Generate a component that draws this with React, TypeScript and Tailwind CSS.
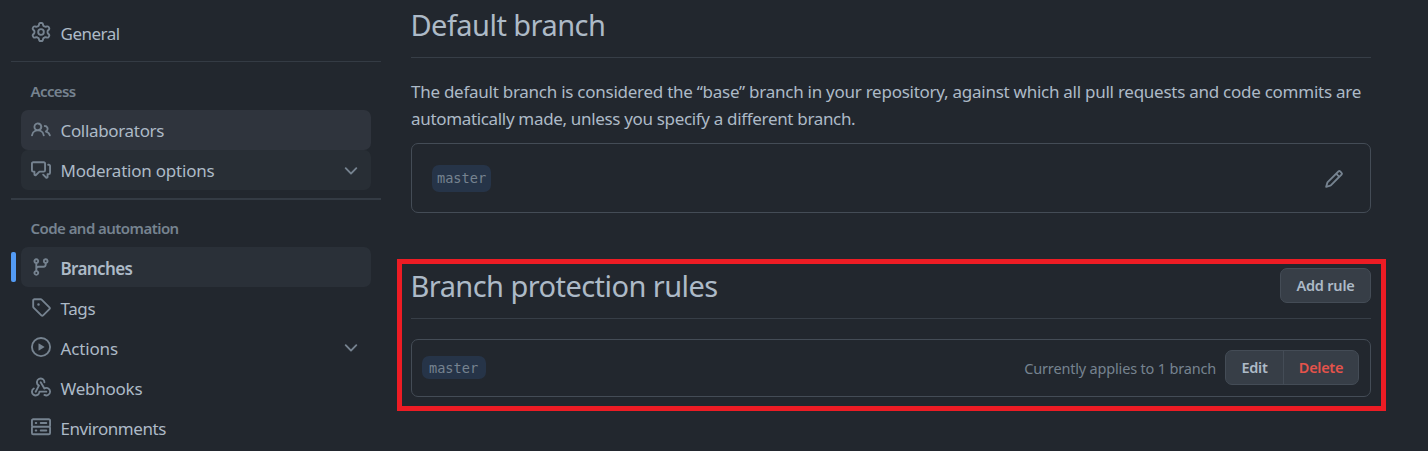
import type { ReactNode } from "react";

const icons = {
  gear: "M8 0a8.2 8.2 0 0 1 .701.031C9.444.095 9.99.645 10.16 1.29l.288 1.107c.018.066.079.158.212.224.231.114.454.243.668.386.123.082.233.09.299.071l1.103-.303c.644-.176 1.392.021 1.82.63.27.385.506.792.704 1.218.315.675.111 1.422-.364 1.891l-.814.806c-.049.048-.098.147-.088.294.016.257.016.515 0 .772-.01.147.038.246.088.294l.814.806c.475.469.679 1.216.364 1.891a7.977 7.977 0 0 1-.704 1.217c-.428.61-1.176.807-1.82.63l-1.102-.302c-.067-.019-.177-.011-.3.071a5.909 5.909 0 0 1-.668.386c-.133.066-.194.158-.211.224l-.29 1.106c-.168.646-.715 1.196-1.458 1.26a8.006 8.006 0 0 1-1.402 0c-.743-.064-1.289-.614-1.458-1.26l-.289-1.106c-.018-.066-.079-.158-.212-.224a5.738 5.738 0 0 1-.668-.386c-.123-.082-.233-.09-.299-.071l-1.103.303c-.644.176-1.392-.021-1.82-.63a8.12 8.12 0 0 1-.704-1.218c-.315-.675-.111-1.422.363-1.891l.815-.806c.05-.048.098-.147.088-.294a6.214 6.214 0 0 1 0-.772c.01-.147-.038-.246-.088-.294l-.815-.806C.635 6.045.431 5.298.746 4.623a7.92 7.92 0 0 1 .704-1.217c.428-.61 1.176-.807 1.82-.63l1.102.302c.067.019.177.011.3-.071.214-.143.437-.272.668-.386.133-.066.194-.158.211-.224l.29-1.106C6.009.645 6.556.095 7.299.03 7.53.01 7.764 0 8 0Zm-.571 1.525c-.036.003-.108.036-.137.146l-.289 1.105c-.147.561-.549.967-.998 1.189-.173.086-.34.183-.5.29-.417.278-.97.423-1.529.27l-1.103-.303c-.109-.03-.175.016-.195.045-.22.312-.412.644-.573.99-.014.031-.021.11.059.19l.815.806c.411.406.562.957.53 1.456a4.709 4.709 0 0 0 0 .582c.032.499-.119 1.05-.53 1.456l-.815.806c-.081.08-.073.159-.059.19.162.346.353.677.573.989.02.03.085.076.195.046l1.102-.303c.56-.153 1.113-.008 1.53.27.161.107.328.204.501.29.447.222.85.629.997 1.189l.289 1.105c.029.109.101.143.137.146a6.6 6.6 0 0 0 1.142 0c.036-.003.108-.036.137-.146l.289-1.105c.147-.561.549-.967.998-1.189.173-.086.34-.183.5-.29.417-.278.97-.423 1.529-.27l1.103.303c.109.029.175-.016.195-.045.22-.313.411-.644.573-.99.014-.031.021-.11-.059-.19l-.815-.806c-.411-.406-.562-.957-.53-1.456a4.709 4.709 0 0 0 0-.582c-.032-.499.119-1.05.53-1.456l.815-.806c.081-.08.073-.159.059-.19a6.464 6.464 0 0 0-.573-.989c-.02-.03-.085-.076-.195-.046l-1.102.303c-.56.153-1.113.008-1.53-.27a4.44 4.44 0 0 0-.501-.29c-.447-.222-.85-.629-.997-1.189l-.289-1.105c-.029-.11-.101-.143-.137-.146a6.6 6.6 0 0 0-1.142 0ZM11 8a3 3 0 1 1-6 0 3 3 0 0 1 6 0ZM9.5 8a1.5 1.5 0 1 0-3.001.001A1.5 1.5 0 0 0 9.5 8Z",
  people:
    "M2 5.5a3.5 3.5 0 1 1 5.898 2.549 5.508 5.508 0 0 1 3.034 4.084.75.75 0 1 1-1.482.235 4 4 0 0 0-7.9 0 .75.75 0 0 1-1.482-.236A5.507 5.507 0 0 1 3.102 8.05 3.493 3.493 0 0 1 2 5.5ZM11 4a3.001 3.001 0 0 1 2.22 5.018 5.01 5.01 0 0 1 2.56 3.012.749.749 0 0 1-.885.954.752.752 0 0 1-.549-.514 3.507 3.507 0 0 0-2.522-2.372.75.75 0 0 1-.574-.73v-.352a.75.75 0 0 1 .416-.672A1.5 1.5 0 0 0 11 5.5.75.75 0 0 1 11 4Zm-5.5-.5a2 2 0 1 0-.001 3.999A2 2 0 0 0 5.5 3.5Z",
  discussion:
    "M1.75 1h8.5c.966 0 1.75.784 1.75 1.75v5.5A1.75 1.75 0 0 1 10.25 10H7.061l-2.574 2.573A1.458 1.458 0 0 1 2 11.543V10h-.25A1.75 1.75 0 0 1 0 8.25v-5.5C0 1.784.784 1 1.75 1ZM1.5 2.75v5.5c0 .138.112.25.25.25h1a.75.75 0 0 1 .75.75v2.19l2.72-2.72a.749.749 0 0 1 .53-.22h3.5a.25.25 0 0 0 .25-.25v-5.5a.25.25 0 0 0-.25-.25h-8.5a.25.25 0 0 0-.25.25Zm13 2a.25.25 0 0 0-.25-.25h-.5a.75.75 0 0 1 0-1.5h.5c.966 0 1.75.784 1.75 1.75v5.5A1.75 1.75 0 0 1 14.25 12H14v1.543a1.458 1.458 0 0 1-2.487 1.03L9.22 12.28a.749.749 0 0 1 .326-1.275.749.749 0 0 1 .734.215l2.22 2.22v-2.19a.75.75 0 0 1 .75-.75h1a.25.25 0 0 0 .25-.25Z",
  branch:
    "M9.5 3.25a2.25 2.25 0 1 1 3 2.122V6A2.5 2.5 0 0 1 10 8.5H6a1 1 0 0 0-1 1v1.128a2.251 2.251 0 1 1-1.5 0V5.372a2.25 2.25 0 1 1 1.5 0v1.836A2.493 2.493 0 0 1 6 7h4a1 1 0 0 0 1-1v-.628A2.25 2.25 0 0 1 9.5 3.25Zm-6 0a.75.75 0 1 0 1.5 0 .75.75 0 0 0-1.5 0Zm8.25-.75a.75.75 0 1 0 0 1.5.75.75 0 0 0 0-1.5ZM4.25 12a.75.75 0 1 0 0 1.5.75.75 0 0 0 0-1.5Z",
  tag: "M1 7.775V2.75C1 1.784 1.784 1 2.75 1h5.025c.464 0 .91.184 1.238.513l6.25 6.25a1.75 1.75 0 0 1 0 2.474l-5.026 5.026a1.75 1.75 0 0 1-2.474 0l-6.25-6.25A1.752 1.752 0 0 1 1 7.775Zm1.5 0c0 .066.026.13.073.177l6.25 6.25a.25.25 0 0 0 .354 0l5.025-5.025a.25.25 0 0 0 0-.354l-6.25-6.25a.25.25 0 0 0-.177-.073H2.75a.25.25 0 0 0-.25.25ZM6 5a1 1 0 1 1 0 2 1 1 0 0 1 0-2Z",
  play: "M8 0a8 8 0 1 1 0 16A8 8 0 0 1 8 0ZM1.5 8a6.5 6.5 0 1 0 13 0 6.5 6.5 0 0 0-13 0Zm4.879-2.773 4.264 2.559a.25.25 0 0 1 0 .428l-4.264 2.559A.25.25 0 0 1 6 10.559V5.442a.25.25 0 0 1 .379-.215Z",
  webhook:
    "M5.5 4.25a2.25 2.25 0 0 1 4.5 0 .75.75 0 0 0 1.5 0 3.75 3.75 0 1 0-6.14 2.889l-2.272 4.258a.75.75 0 0 0 1.324.706L7 7.25a.75.75 0 0 0-.309-1.015A2.25 2.25 0 0 1 5.5 4.25ZM7.364 3.607a.75.75 0 0 1 1.03.257l2.608 4.349a3.75 3.75 0 1 1-.628 6.785.75.75 0 0 1 .752-1.299 2.25 2.25 0 1 0-.033-3.88.75.75 0 0 1-1.03-.256L7.107 4.636a.75.75 0 0 1 .257-1.03ZM2.9 8.776A.75.75 0 0 1 2.625 9.8 2.25 2.25 0 1 0 6 11.75a.75.75 0 0 1 .75-.751h5.5a.75.75 0 0 1 0 1.5H7.425a3.751 3.751 0 1 1-5.55-3.998.75.75 0 0 1 1.024.274Z",
  server:
    "M1.75 1h12.5c.966 0 1.75.784 1.75 1.75v4c0 .372-.116.717-.314 1 .198.283.314.628.314 1v4a1.75 1.75 0 0 1-1.75 1.75H1.75A1.75 1.75 0 0 1 0 12.75v-4c0-.358.109-.707.314-1a1.739 1.739 0 0 1-.314-1v-4C0 1.784.784 1 1.75 1ZM1.5 2.75v4c0 .138.112.25.25.25h12.5a.25.25 0 0 0 .25-.25v-4a.25.25 0 0 0-.25-.25H1.75a.25.25 0 0 0-.25.25Zm.25 5.75a.25.25 0 0 0-.25.25v4c0 .138.112.25.25.25h12.5a.25.25 0 0 0 .25-.25v-4a.25.25 0 0 0-.25-.25ZM7 4.75A.75.75 0 0 1 7.75 4h4.5a.75.75 0 0 1 0 1.5h-4.5A.75.75 0 0 1 7 4.75ZM7.75 10h4.5a.75.75 0 0 1 0 1.5h-4.5a.75.75 0 0 1 0-1.5ZM3 4.75A.75.75 0 0 1 3.75 4h.5a.75.75 0 0 1 0 1.5h-.5A.75.75 0 0 1 3 4.75ZM3.75 10h.5a.75.75 0 0 1 0 1.5h-.5a.75.75 0 0 1 0-1.5Z",
  pencil:
    "M11.013 1.427a1.75 1.75 0 0 1 2.474 0l1.086 1.086a1.75 1.75 0 0 1 0 2.474l-8.61 8.61c-.21.21-.47.364-.756.445l-3.251.93a.75.75 0 0 1-.927-.928l.929-3.25c.081-.286.235-.547.445-.758l8.61-8.61Zm.176 4.823L9.75 4.81l-6.286 6.287a.253.253 0 0 0-.064.108l-.558 1.953 1.953-.558a.253.253 0 0 0 .108-.064Zm1.238-3.763a.25.25 0 0 0-.354 0L10.811 3.75l1.439 1.44 1.263-1.263a.25.25 0 0 0 0-.354Z",
  chevron:
    "M12.78 5.22a.749.749 0 0 1 0 1.06l-4.25 4.25a.749.749 0 0 1-1.06 0L3.22 6.28a.749.749 0 1 1 1.06-1.06L8 8.939l3.72-3.719a.749.749 0 0 1 1.06 0Z",
};

function Icon({ name, className = "" }: { name: keyof typeof icons; className?: string }) {
  return (
    <svg viewBox="0 0 16 16" className={`size-5 shrink-0 fill-[#768390] ${className}`} aria-hidden="true">
      <path d={icons[name]} />
    </svg>
  );
}

type ItemProps = {
  icon: keyof typeof icons;
  label: string;
  text?: string;
  className?: string;
  expandable?: boolean;
};

function Item({ icon, label, text = "pt-1 tracking-[-0.4px]", className = "", expandable }: ItemProps) {
  return (
    <li className={`mx-2.5 flex h-10 items-center gap-[9.5px] rounded-[7px] px-2.5 ${className}`}>
      <Icon name={icon} />
      <span className={`grow text-[17px] leading-6 whitespace-nowrap text-[#adbac7] ${text}`}>{label}</span>
      {expandable && <Icon name="chevron" className="mt-0.5" />}
    </li>
  );
}

function GroupTitle({ children, className }: { children: ReactNode; className: string }) {
  return (
    <h3 className={`pl-[19.5px] text-[15px] leading-5 font-semibold whitespace-nowrap text-[#768390] ${className}`}>
      {children}
    </h3>
  );
}

function BranchName({ className }: { className: string }) {
  return (
    <span
      className={`flex items-center rounded-[7px] bg-[#263448] pt-0.5 font-['DejaVu_Sans_Mono',monospace] text-[13.6px] leading-none text-[#768390] ${className}`}
    >
      master
    </span>
  );
}

export default function App() {
  return (
    <div className="relative flex h-[451px] w-[1428px] overflow-hidden bg-[#22272e] font-['Noto_Sans',sans-serif] text-[#adbac7]">
      <nav className="ml-[11px] w-[370px] shrink-0 pt-3">
        <ul>
          <Item icon="gear" label="General" text="pt-1 tracking-[-0.5px]" />
        </ul>
        <hr className="mt-[9px] border-[#343b44]" />
        <GroupTitle className="mt-[19px] mb-[9px] tracking-[-0.6px]">Access</GroupTitle>
        <ul>
          <Item
            icon="people"
            label="Collaborators"
            text="pt-0.5 tracking-[-0.33px]"
            className="bg-[#2f343d]"
          />
          <Item
            icon="discussion"
            label="Moderation options"
            text="pt-0.5 tracking-[-0.22px]"
            className="bg-[#282e35]"
            expandable
          />
        </ul>
        <hr className="mt-2 border-t-2 border-[#343b44]" />
        <GroupTitle className="mt-[18px] mb-[9px] tracking-[-0.55px]">Code and automation</GroupTitle>
        <ul>
          <Item
            icon="branch"
            label="Branches"
            text="pt-1 font-semibold tracking-[-0.62px]"
            className="relative bg-[#2a3038] before:absolute before:top-[5px] before:-left-2.5 before:h-[30px] before:w-[5px] before:rounded-[2px] before:bg-[#539bf5]"
          />
          <Item icon="tag" label="Tags" />
          <Item icon="play" label="Actions" text="pt-1 tracking-[-0.15px]" expandable />
          <Item icon="webhook" label="Webhooks" text="pt-1 tracking-[-0.25px]" />
          <Item icon="server" label="Environments" text="pt-1 tracking-[-0.45px]" />
        </ul>
      </nav>

      <main className="ml-[30px] w-[960px] shrink-0 whitespace-nowrap">
        <h2 className="-ml-[0.5px] flex h-[58px] items-center pb-2 text-[29px] tracking-[-0.55px]">Default branch</h2>
        <hr className="-mt-px border-[#373e47]" />
        <p className="mt-5 text-[17px] leading-[27px] tracking-[-0.26px]">
          The default branch is considered the “base” branch in your repository, against which all pull requests and
          code commits are
          <br />
          <span className="tracking-[-0.33px]">automatically made, unless you specify a different branch.</span>
        </p>
        <div className="mt-[11px] flex h-[70px] items-center justify-between rounded-[7px] border border-[#444c56] pr-[26px] pl-5">
          <BranchName className="h-[27px] px-[5px]" />
          <Icon name="pencil" className="mt-0.5" />
        </div>

        <div className="mt-[46px] flex h-[60px] items-start justify-between border-b border-[#373e47] pt-[9px]">
          <h2 className="-mt-0.5 -ml-[0.5px] text-[29px] leading-10 tracking-[-0.56px]">Branch protection rules</h2>
          <button className="h-[35px] w-[91px] rounded-[7px] border border-[#444c56] bg-[#373e47] text-[14.5px] font-semibold tracking-[-0.2px]">
            Add rule
          </button>
        </div>
        <div className="mt-5 flex h-[58px] items-center rounded-[7px] border border-[#444c56] pr-[11px] pl-2.5">
          <BranchName className="-mt-px h-[23px] w-16 px-[7px]" />
          <span className="mt-0.5 mr-[9px] ml-auto text-[14.5px] tracking-[-0.18px] text-[#768390]">
            Currently applies to 1 branch
          </span>
          <div className="-mt-0.5 flex h-[35px] w-[134px] rounded-[7px] border border-[#444c56] bg-[#373e47] text-[14.5px] font-semibold">
            <button className="w-[58px] border-r border-[#444c56] pt-0.5 tracking-[-0.3px]">Edit</button>
            <button className="grow pt-0.5 tracking-[-0.3px] text-[#e5534b]">Delete</button>
          </div>
        </div>
      </main>

      <div className="pointer-events-none absolute top-[259px] left-[397px] h-[152px] w-[989px] border-5 border-[#ed1c24]" />
    </div>
  );
}
